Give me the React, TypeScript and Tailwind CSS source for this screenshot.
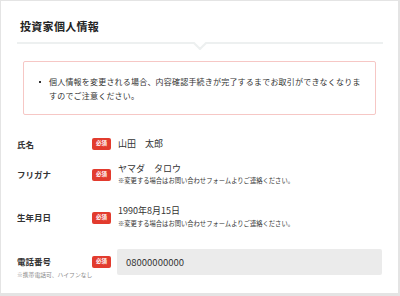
const font = { fontFamily: '"Noto Sans CJK JP", "Noto Sans", sans-serif' };

function Badge({ className = '' }: { className?: string }) {
  return (
    <span
      className={`flex h-[12px] w-[19px] shrink-0 items-center justify-center rounded-[2px] bg-[#e23b2e] text-[5.5px] font-bold leading-none text-white ${className}`}
    >
      必須
    </span>
  );
}

export default function App() {
  return (
    <div className="h-[296px] w-[400px] bg-[#e4e4e4] pl-px pt-px text-[#333]" style={font}>
      <div className="h-[292px] w-[397px] bg-white px-[16px]">
        {/* Heading */}
        <div className="pl-[3px] pt-[17px] text-[11px] font-bold leading-[16px] tracking-[0.3px] text-[#222]">
          投資家個人情報
        </div>
        <div className="relative mt-[8px] h-[8px] w-[366px]">
          <svg width="366" height="8" viewBox="0 0 366 8" className="block">
            <polyline
              points="0,1 177,1 183,7 189,1 366,1"
              fill="none"
              stroke="#edf0f0"
              strokeWidth="2"
            />
          </svg>
        </div>

        {/* Notice */}
        <div className="mx-[6px] mt-[11px] flex h-[54px] items-start rounded-[2px] border border-[#f6c7c5] pl-[15px] pr-[14px] pt-[13px]">
          <span className="mr-[8px] mt-[6px] h-[2px] w-[2px] shrink-0 bg-[#333]" />
          <p className="text-[8px] leading-[13.5px] tracking-[0.2px]">
            個人情報を変更される場合、内容確認手続きが完了するまでお取引ができなくなりますのでご注意ください。
          </p>
        </div>

        {/* 氏名 */}
        <div className="mt-[22px] flex h-[14px] items-center">
          <div className="w-[75px] text-[8.5px] font-bold">氏名</div>
          <Badge />
          <div className="ml-[7px] text-[9px] leading-[12px]">山田　太郎</div>
        </div>

        {/* フリガナ */}
        <div className="mt-[12px] flex items-center">
          <div className="w-[75px] text-[8.5px] font-bold">フリガナ</div>
          <Badge className="mt-[1px]" />
          <div className="ml-[7px]">
            <div className="text-[9px] leading-[12px]">ヤマダ　タロウ</div>
            <div className="mt-[1px] text-[6.3px] leading-[10px]">
              ※変更する場合はお問い合わせフォームよりご連絡ください。
            </div>
          </div>
        </div>

        {/* 生年月日 */}
        <div className="mt-[19px] flex items-center">
          <div className="w-[75px] text-[8.5px] font-bold">生年月日</div>
          <Badge className="mt-[2px]" />
          <div className="ml-[7px]">
            <div className="text-[9px] leading-[12px]">1990年8月15日</div>
            <div className="mt-[2px] text-[6.3px] leading-[10px]">
              ※変更する場合はお問い合わせフォームよりご連絡ください。
            </div>
          </div>
        </div>

        {/* 電話番号 */}
        <div className="mt-[20px] flex items-start">
          <div className="w-[75px] pt-[6px]">
            <div className="text-[8.5px] font-bold leading-[12px]">電話番号</div>
            <div className="mt-[3px] whitespace-nowrap text-[5.8px] leading-[10px] text-[#888]">
              ※携帯電話可、ハイフンなし
            </div>
          </div>
          <Badge className="mt-[7px]" />
          <div className="ml-[6px] flex h-[26px] w-[266px] items-center rounded-[2px] bg-[#ebebeb] pl-[9px] text-[9.5px]">
            08000000000
          </div>
        </div>
      </div>
    </div>
  );
}
